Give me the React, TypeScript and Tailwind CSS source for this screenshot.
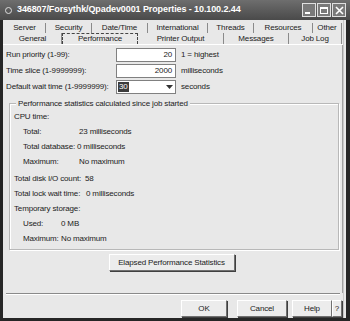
import React from 'react'

// Win-style "Properties" dialog, Performance tab

const rowTabs = [
    { label: 'Server', w: 42 },
    { label: 'Security', w: 46 },
    { label: 'Date/Time', w: 56 },
    { label: 'International', w: 60 },
    { label: 'Threads', w: 46 },
    { label: 'Resources', w: 59 },
    { label: 'Other', w: 29 },
]

const frontTabs = [
    { label: 'General', w: 58 },
    { label: 'Performance', w: 76, active: true },
    { label: 'Printer Output', w: 86 },
    { label: 'Messages', w: 65 },
    { label: 'Job Log', w: 53 },
]

function TitleButton({ children }: { children: React.ReactNode }) {
    return (
        <div className="w-[14px] h-[14px] border border-[#e0e0e0] bg-[#7a7a7a] flex items-center justify-center text-white">
            {children}
        </div>
    )
}

function Field({ label, value, unit, combo }: { label: string; value: string; unit: string; combo?: boolean }) {
    return (
        <div className="flex items-center h-[16px]">
            <div className="w-[110px] whitespace-nowrap">{label}</div>
            {combo ? (
                <div className="w-[60px] h-[14px] bg-white border border-[#808080] flex items-center">
                    <span className="bg-[#3c3c3c] text-white px-[1px] ml-[1px] leading-[10px]">30</span>
                    <span className="flex-1" />
                    <span className="w-[11px] h-[12px] flex items-center justify-center">
                        <svg width="7" height="4" viewBox="0 0 7 4">
                            <path d="M0 0h7L3.5 4z" fill="#333" />
                        </svg>
                    </span>
                </div>
            ) : (
                <div className="w-[60px] h-[14px] bg-white border border-[#808080] flex items-center justify-end pr-[3px]">
                    {value}
                </div>
            )}
            <div className="ml-[5px] whitespace-nowrap">{unit}</div>
        </div>
    )
}

function Stat({ label, value, indent, w }: { label: string; value?: string; indent?: boolean; w?: number }) {
    return (
        <div className={`flex items-center h-[15px] whitespace-nowrap ${indent ? 'pl-[9px]' : ''}`}>
            <span style={{ width: w }} className="shrink-0">
                {label}
            </span>
            {value && <span>{value}</span>}
        </div>
    )
}

function Btn({ children, w }: { children: React.ReactNode; w: string }) {
    return (
        <div
            className={`${w} h-[17px] whitespace-nowrap flex items-center justify-center bg-[#ececec] border border-t-white border-l-white border-r-[#707070] border-b-[#707070] shadow-[1px_1px_0_#404040]`}
        >
            {children}
        </div>
    )
}

export default function App() {
    return (
        <div className="w-[350px] h-[321px] bg-[#262626] flex flex-col font-['Liberation_Sans',Arial,sans-serif] text-[8px] tracking-[-0.15px] text-[#222] overflow-hidden">
            {/* Title bar */}
            <div className="h-[20px] shrink-0 bg-gradient-to-b from-[#6e6e6e] to-[#4a4a4a] flex items-center pl-[5px] pr-[4px] text-white">
                <span className="w-[7px] h-[7px] rounded-full border border-[#ddd] mr-[5px]" />
                <span className="text-[9px] font-bold tracking-[-0.1px] whitespace-nowrap">
                    346807/Forsythk/Qpadev0001 Properties - 10.100.2.44
                </span>
                <span className="flex-1" />
                <div className="flex gap-[1px]">
                    <TitleButton>
                        <span className="w-[5px] h-[2px] bg-white mt-[6px] -ml-[3px]" />
                    </TitleButton>
                    <TitleButton>
                        <span className="w-[8px] h-[7px] border border-white border-t-2" />
                    </TitleButton>
                    <TitleButton>
                        <svg width="9" height="9" viewBox="0 0 9 9">
                            <path d="M1 1l7 7M8 1l-7 7" stroke="#fff" strokeWidth="1.6" />
                        </svg>
                    </TitleButton>
                </div>
            </div>

            {/* Dialog body */}
            <div className="flex-1 flex ml-[3px] mr-[4px] mb-[3px] bg-[#e8e8e8]">
                <div className="flex-1 flex flex-col">
                    {/* Tab rows */}
                    <div className="flex mt-[2px] pl-[1px] h-[11px] items-end">
                        {rowTabs.map((t) => (
                            <div key={t.label} style={{ width: t.w }} className="text-center leading-[10px] border-r border-[#8a8a8a] whitespace-nowrap">
                                {t.label}
                            </div>
                        ))}
                    </div>
                    <div className="flex pl-[1px] h-[12px] border-b border-white">
                        {frontTabs.map((t) =>
                            t.active ? (
                                <div
                                    key={t.label}
                                    style={{ width: t.w }}
                                    className="text-center leading-[10px] border border-dashed border-[#444] border-b-0 bg-[#e8e8e8] whitespace-nowrap"
                                >
                                    {t.label}
                                </div>
                            ) : (
                                <div key={t.label} style={{ width: t.w }} className="text-center leading-[11px] border-r border-[#8a8a8a] whitespace-nowrap">
                                    {t.label}
                                </div>
                            ),
                        )}
                    </div>

                    {/* Panel */}
                    <div className="flex-1 flex flex-col pl-[3px] pr-[3px] border-r border-[#a0a0a0]">
                        <div className="mt-[2px]">
                            <Field label="Run priority (1-99):" value="20" unit="1 = highest" />
                            <Field label="Time slice (1-9999999):" value="2000" unit="milliseconds" />
                            <Field label="Default wait time (1-9999999):" value="30" unit="seconds" combo />
                        </div>

                        <div className="relative mt-[8px] ml-[3px] h-[147px] border border-[#b8b8b8] shadow-[inset_1px_1px_0_#fff,1px_1px_0_#fff] pt-[5px] pl-[4px]">
                            <span className="absolute -top-[6px] left-[6px] bg-[#e8e8e8] px-[2px] leading-[11px] whitespace-nowrap">
                                Performance statistics calculated since job started
                            </span>
                            <Stat label="CPU time:" />
                            <Stat label="Total:" value="23 milliseconds" indent w={56} />
                            <Stat label="Total database:" value="0 milliseconds" indent w={54} />
                            <Stat label="Maximum:" value="No maximum" indent w={56} />
                            <div className="h-[2px]" />
                            <Stat label="Total disk I/O count:" value="58" w={71} />
                            <Stat label="Total lock wait time:" value="0 milliseconds" w={72} />
                            <Stat label="Temporary storage:" />
                            <Stat label="Used:" value="0 MB" indent w={38} />
                            <Stat label="Maximum:" value="No maximum" indent w={38} />
                        </div>

                        <div className="flex justify-center mt-[4px] pr-[2px]">
                            <Btn w="w-[126px]">Elapsed Performance Statistics</Btn>
                        </div>
                    </div>

                    {/* Separator + bottom buttons */}
                    <div className="mx-[3px] h-[2px] border-t border-[#8a8a8a] border-b border-b-white" />
                    <div className="h-[23px] flex justify-end items-start pr-[1px] pt-[5px]">
                        <Btn w="w-[46px]">OK</Btn>
                        <div className="ml-[10px]">
                            <Btn w="w-[50px]">Cancel</Btn>
                        </div>
                        <div className="flex ml-[5px]">
                            <Btn w="w-[40px]">Help</Btn>
                            <Btn w="w-[10px]">?</Btn>
                        </div>
                    </div>
                </div>
                <div className="w-[3px] border-l border-[#c8c8c8]" />
            </div>
        </div>
    )
}
